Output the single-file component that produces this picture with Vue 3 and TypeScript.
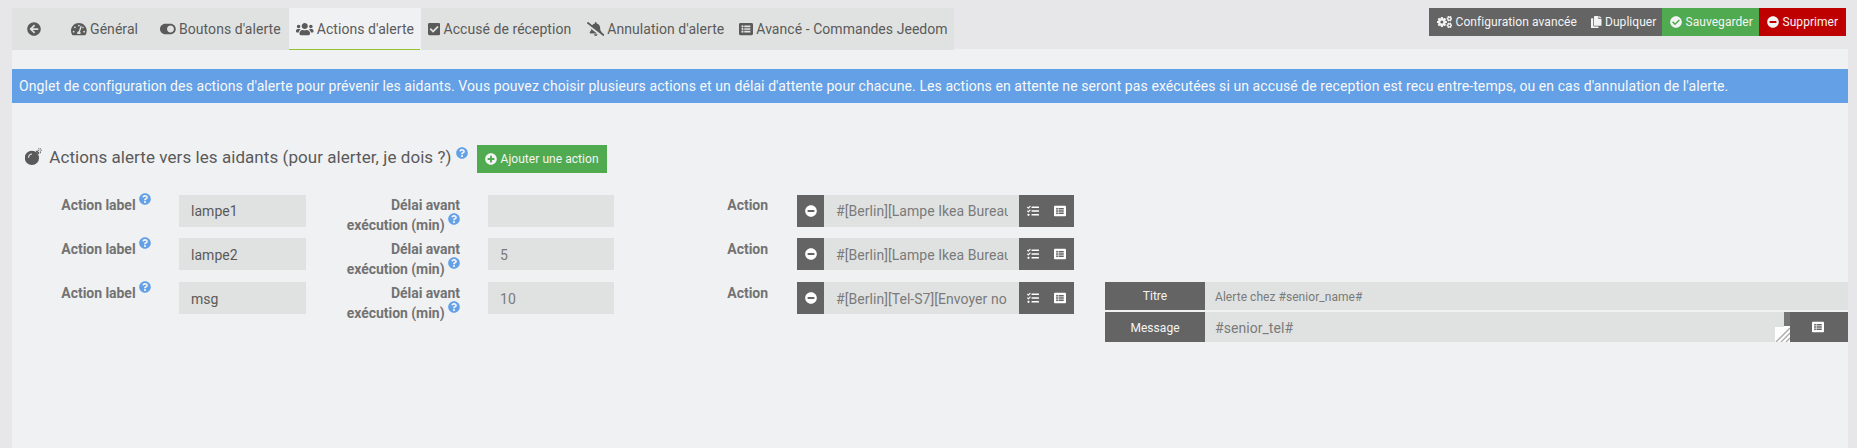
<script setup lang="ts">
import { defineComponent, h } from 'vue'

const circle = 'M504 256c0 137-111 248-248 248S8 393 8 256 119 8 256 8s248 111 248 248z'
const taskBars = 'M496 384H208a16 16 0 0 0-16 16v32a16 16 0 0 0 16 16h288a16 16 0 0 0 16-16v-32a16 16 0 0 0-16-16zm0-320H208a16 16 0 0 0-16 16v32a16 16 0 0 0 16 16h288a16 16 0 0 0 16-16V80a16 16 0 0 0-16-16zm0 160H208a16 16 0 0 0-16 16v32a16 16 0 0 0 16 16h288a16 16 0 0 0 16-16v-32a16 16 0 0 0-16-16z'

function gear(cx: number, cy: number, outer: number, inner: number, hole: number, teeth: number): string {
  const pts: string[] = []
  const step = (Math.PI * 2) / teeth
  for (let i = 0; i < teeth; i++) {
    const a = i * step
    const corners: [number, number][] = [[-0.36, inner], [-0.26, outer], [0.26, outer], [0.36, inner]]
    for (const [o, r] of corners) {
      pts.push(`${(cx + r * Math.cos(a + o * step)).toFixed(1)} ${(cy + r * Math.sin(a + o * step)).toFixed(1)}`)
    }
  }
  return `M${pts.join('L')}ZM${cx - hole} ${cy}a${hole} ${hole} 0 1 0 ${hole * 2} 0a${hole} ${hole} 0 1 0 ${-hole * 2} 0Z`
}

const icons: Record<string, { w: number; d: string }> = {
  back: { w: 512, d: 'M256 504C119 504 8 393 8 256S119 8 256 8s248 111 248 248-111 248-248 248zm28.9-143.6L209.4 288H392c13.3 0 24-10.7 24-24v-16c0-13.3-10.7-24-24-24H209.4l75.5-72.4c9.7-9.3 9.9-24.8.4-34.3l-11-10.9c-9.4-9.4-24.6-9.4-33.9 0L107.7 239c-9.4 9.4-9.4 24.6 0 33.9l132.7 132.7c9.4 9.4 24.6 9.4 33.9 0l11-10.9c9.5-9.5 9.3-25-.4-34.3z' },
  gauge: { w: 576, d: 'M288 32C129 32 0 161 0 320c0 53 14 102 39 145 6 10 17 15 28 15h442c11 0 22-5 28-15 25-43 39-92 39-145C576 161 447 32 288 32zM288 96a32 32 0 1 1 0 64 32 32 0 0 1 0-64zM96 384a32 32 0 1 1 0-64 32 32 0 0 1 0 64zm48-160a32 32 0 1 1 0-64 32 32 0 0 1 0 64zm247-52l-61 184c13 12 22 28 22 48 0 12-3 23-9 32H233c-6-9-9-20-9-32 0-34 27-62 60-64l61-183c4-13 18-20 31-15 12 4 19 17 15 30zm14 57l23-69c22 0 36 14 36 32 0 22-18 37-36 37-9 0-17 0-23 0zm75 155a32 32 0 1 1 0-64 32 32 0 0 1 0 64z' },
  toggle: { w: 576, d: 'M384 64H192C86 64 0 150 0 256s86 192 192 192h192c106 0 192-86 192-192S490 64 384 64zm0 320c-70.8 0-128-57.3-128-128 0-70.8 57.3-128 128-128 70.8 0 128 57.3 128 128 0 70.8-57.3 128-128 128z' },
  users: { w: 640, d: 'M96 224c35.3 0 64-28.7 64-64s-28.7-64-64-64-64 28.7-64 64 28.7 64 64 64zm448 0c35.3 0 64-28.7 64-64s-28.7-64-64-64-64 28.7-64 64 28.7 64 64 64zm32 32h-64c-17.6 0-33.5 7.1-45.1 18.6 40.3 22.1 68.9 62 75.1 109.4h66c17.7 0 32-14.3 32-32v-32c0-35.3-28.7-64-64-64zm-256 0c61.9 0 112-50.1 112-112S381.9 32 320 32 208 82.1 208 144s50.1 112 112 112zm76.8 32h-8.3c-20.8 10-43.9 16-68.5 16s-47.6-6-68.5-16h-8.3C179.6 288 128 339.6 128 403.2V432c0 26.5 21.5 48 48 48h288c26.5 0 48-21.5 48-48v-28.8c0-63.6-51.6-115.2-115.2-115.2zm-223.7-13.4C161.5 263.1 145.6 256 128 256H64c-35.3 0-64 28.7-64 64v32c0 17.7 14.3 32 32 32h65.9c6.3-47.4 34.9-87.3 75.2-109.4z' },
  checkSquare: { w: 448, d: 'M400 480H48c-26.51 0-48-21.49-48-48V80c0-26.51 21.49-48 48-48h352c26.51 0 48 21.49 48 48v352c0 26.51-21.49 48-48 48zm-204.686-98.059l184-184c6.248-6.248 6.248-16.379 0-22.627l-22.627-22.627c-6.248-6.248-16.379-6.249-22.628 0L184 302.745l-70.059-70.059c-6.248-6.248-16.379-6.248-22.628 0l-22.627 22.627c-6.248 6.248-6.248 16.379 0 22.627l104 104c6.249 6.25 16.379 6.25 22.628.001z' },
  bellSlash: { w: 640, d: 'M633.82 458.1l-90.62-70.05c.19-1.38.8-2.66.8-4.06.05-7.55-2.61-15.27-8.61-21.71-19.32-20.76-55.47-51.99-55.47-154.29 0-77.7-54.48-139.9-127.94-155.16V32c0-17.67-14.32-32-31.98-32s-31.98 14.33-31.98 32v20.84c-40.33 8.38-74.66 31.07-97.59 62.57L45.47 3.37C38.49-2.05 28.43-.8 23.01 6.18L3.37 31.45C-2.05 38.42-.8 48.47 6.18 53.9l588.35 454.73c6.98 5.43 17.03 4.17 22.46-2.81l19.64-25.27c5.42-6.97 4.17-17.02-2.81-22.45zM157.23 251.54c-8.61 67.96-36.41 93.33-52.62 110.75-6 6.45-8.66 14.16-8.61 21.71.11 16.4 12.98 32 32.1 32h241.12L157.23 251.54zM320 512c35.32 0 63.97-28.65 63.97-64H256.03c0 35.35 28.65 64 63.97 64z' },
  list: { w: 512, d: 'M464 480H48c-26.51 0-48-21.49-48-48V80c0-26.51 21.49-48 48-48h416c26.51 0 48 21.49 48 48v352c0 26.51-21.49 48-48 48zM88 160a40 40 0 1 0 80 0 40 40 0 1 0-80 0zM88 256a40 40 0 1 0 80 0 40 40 0 1 0-80 0zM88 352a40 40 0 1 0 80 0 40 40 0 1 0-80 0zM192 132v56h224v-56zM192 228v56h224v-56zM192 324v56h224v-56z' },
  cogs: { w: 640, d: gear(208, 256, 218, 166, 66, 8) + gear(528, 112, 122, 92, 40, 6) + gear(528, 400, 122, 92, 40, 6) },
  copy: { w: 448, d: 'M320 448v40c0 13.255-10.745 24-24 24H24c-13.255 0-24-10.745-24-24V120c0-13.255 10.745-24 24-24h72v296c0 30.879 25.121 56 56 56h168zm0-344V0H152c-13.255 0-24 10.745-24 24v368c0 13.255 10.745 24 24 24h272c13.255 0 24-10.745 24-24V128H344c-13.2 0-24-10.8-24-24zm120.971-31.029L375.029 7.029A24 24 0 0 0 358.059 0H352v96h96v-6.059a24 24 0 0 0-7.029-16.97z' },
  check: { w: 512, d: circle + 'M227.314 387.314l184-184c6.248-6.248 6.248-16.379 0-22.627l-22.627-22.627c-6.248-6.249-16.379-6.249-22.628 0L216 308.118l-70.059-70.059c-6.248-6.248-16.379-6.248-22.628 0l-22.627 22.627c-6.248 6.248-6.248 16.379 0 22.627l104 104c6.249 6.249 16.379 6.249 22.628.001z' },
  minus: { w: 512, d: circle + 'M124 296c-6.6 0-12-5.4-12-12v-56c0-6.6 5.4-12 12-12h264c6.6 0 12 5.4 12 12v56c0 6.6-5.4 12-12 12H124z' },
  plus: { w: 512, d: circle + 'M400 284c0 6.6-5.4 12-12 12h-92v92c0 6.6-5.4 12-12 12h-56c-6.6 0-12-5.4-12-12v-92h-92c-6.6 0-12-5.4-12-12v-56c0-6.6 5.4-12 12-12h92v-92c0-6.6 5.4-12 12-12h56c6.6 0 12 5.4 12 12v92h92c6.6 0 12 5.4 12 12v56z' },
  help: { w: 512, d: circle + 'M262.655 90c-54.497 0-89.255 22.957-116.549 63.758-3.536 5.286-2.353 12.415 2.715 16.258l34.699 26.31c5.205 3.947 12.621 3.008 16.665-2.122 17.864-22.658 30.113-35.797 57.303-35.797 20.429 0 45.698 13.148 45.698 32.958 0 14.976-12.363 22.667-32.534 33.976C247.128 238.528 216 254.941 216 296v4c0 6.627 5.373 12 12 12h56c6.627 0 12-5.373 12-12v-1.333c0-28.462 83.186-29.647 83.186-106.667 0-58.002-60.165-102-116.531-102zM256 338c-25.365 0-46 20.635-46 46 0 25.364 20.635 46 46 46s46-20.636 46-46c0-25.365-20.635-46-46-46z' },
  tasks: { w: 512, d: 'M139.61 35.5a12 12 0 0 0-17 0L58.93 98.81l-22.7-22.12a12 12 0 0 0-17 0L3.53 92.41a12 12 0 0 0 0 17l47.59 47.4a12.78 12.78 0 0 0 17.61 0l15.59-15.62L156.52 69a12.09 12.09 0 0 0 .09-17zm0 159.19a12 12 0 0 0-17 0l-63.68 63.72-22.7-22.1a12 12 0 0 0-17 0L3.53 252a12 12 0 0 0 0 17L51 316.5a12.77 12.77 0 0 0 17.6 0l15.7-15.69 72.2-72.22a12 12 0 0 0 .09-16.9zM64 368c-26.49 0-48.59 21.5-48.59 48S37.53 464 64 464a48 48 0 0 0 0-96z' + taskBars },
  bomb: { w: 512, d: 'M208 80a216 216 0 1 0 0 432 216 216 0 1 0 0-432zM92 296c0-72 50-128 116-128v30c-50 0-86 40-86 98zM324 104l34-34 84 84-34 34zM390 60l42 10-10 24-40-14zM448 0l22 0 0 44-24 0zM440 96l30-24 18 20-30 24zM480 52l32 0 0 24-32 0zM452 120l24 0 0 38-24 0zM396 16l20-14 20 34-20 12z' },
}

const Icon = defineComponent({
  props: { name: { type: String, required: true }, size: { type: Number, default: 14 } },
  setup(props) {
    return () => {
      const icon = icons[props.name]
      return h('svg', {
        viewBox: `0 0 ${icon.w} 512`,
        width: (icon.w / 512) * props.size,
        height: props.size,
        fill: 'currentColor',
        'fill-rule': 'evenodd',
        'aria-hidden': 'true',
      }, [h('path', { d: icon.d })])
    }
  },
})

const tabs = [
  { icon: 'back', label: '' },
  { icon: 'gauge', label: 'Général' },
  { icon: 'toggle', label: "Boutons d'alerte" },
  { icon: 'users', label: "Actions d'alerte", active: true },
  { icon: 'checkSquare', label: 'Accusé de réception' },
  { icon: 'bellSlash', label: "Annulation d'alerte" },
  { icon: 'list', label: 'Avancé - Commandes Jeedom' },
]

interface AlertAction { label: string; delay: string; command: string; title?: string; message?: string }
const actions: AlertAction[] = [
  { label: 'lampe1', delay: '', command: '#[Berlin][Lampe Ikea Bureau' },
  { label: 'lampe2', delay: '5', command: '#[Berlin][Lampe Ikea Bureau' },
  { label: 'msg', delay: '10', command: '#[Berlin][Tel-S7][Envoyer no', title: 'Alerte chez #senior_name#', message: '#senior_tel#' },
]
</script>

<template>
  <div class="page">
    <header class="top">
      <nav class="tabs">
        <a v-for="(tab, i) in tabs" :key="i" class="tab" :class="{ active: tab.active, back: !tab.label }">
          <Icon :name="tab.icon" /><span v-if="tab.label">{{ tab.label }}</span>
        </a>
      </nav>
      <div class="toolbar">
        <a class="btn config"><Icon name="cogs" :size="12" /><span>Configuration avancée</span></a>
        <a class="btn copy"><Icon name="copy" :size="12" /><span>Dupliquer</span></a>
        <a class="btn save"><Icon name="check" :size="12" /><span>Sauvegarder</span></a>
        <a class="btn remove"><Icon name="minus" :size="12" /><span>Supprimer</span></a>
      </div>
    </header>
    <main class="panel">
      <div class="notice">Onglet de configuration des actions d'alerte pour prévenir les aidants. Vous pouvez choisir plusieurs actions et un délai d'attente pour chacune. Les actions en attente ne seront pas exécutées si un accusé de reception est recu entre-temps, ou en cas d'annulation de l'alerte.</div>
      <div class="legend">
        <Icon name="bomb" :size="17" />
        <h1>Actions alerte vers les aidants (pour alerter, je dois ?)</h1>
        <Icon class="help" name="help" :size="12" />
        <a class="btn add"><Icon name="plus" :size="12" /><span>Ajouter une action</span></a>
      </div>
      <form class="rows">
        <div v-for="(action, i) in actions" :key="i" class="row">
          <label>Action label <Icon class="help" name="help" :size="12" /></label>
          <input class="field" :value="action.label">
          <label>Délai avant<br>exécution (min) <Icon class="help" name="help" :size="12" /></label>
          <input class="field muted" :value="action.delay">
          <label>Action</label>
          <div class="command">
            <span class="cap"><Icon name="minus" :size="12" /></span>
            <input class="field muted" :value="action.command">
            <span class="cap pair"><Icon name="tasks" :size="12" /><Icon name="list" :size="12" /></span>
          </div>
          <div v-if="action.title" class="options">
            <div class="option">
              <span class="name">Titre</span>
              <input class="field muted small" :value="action.title">
            </div>
            <div class="option message">
              <span class="name">Message</span>
              <div class="area">
                {{ action.message }}
                <svg class="grip" viewBox="0 0 15 16" width="15" height="16" aria-hidden="true">
                  <path d="M0 1H9V0H15V16H0Z" fill="#fff" />
                  <path d="M1 16L15 2M6 16L15 7M11 16L15 12" stroke="#aaa" stroke-width="1.3" fill="none" />
                </svg>
              </div>
              <span class="pick"><Icon name="list" :size="12" /></span>
            </div>
          </div>
        </div>
      </form>
    </main>
  </div>
</template>

<style>
body { margin: 0; background: #e7e7e9; }
</style>

<style scoped>
.page {
  box-sizing: border-box;
  height: 448px;
  padding: 8px 9px 0 12px;
  overflow: hidden;
  background: #e7e7e9;
  color: #5a5a5a;
  font: 14px/20px Roboto, "Liberation Sans", sans-serif;
  letter-spacing: 0.05px;
  display: flex;
  flex-direction: column;
}
svg { flex: none; display: block; }
.top { display: flex; justify-content: space-between; height: 41px; }
.tabs { display: grid; grid-template-columns: 52px 89px 136px 132px 158.5px 152.5px 222px; height: 42px; z-index: 1; }
.tab {
  display: flex; align-items: center; gap: 3.3px; padding: 0 0 0 7px; height: 42px;
  box-sizing: border-box; background: #e0e2e1; white-space: nowrap;
}
.tab.back { padding-left: 15px; }
.tab.active { background: linear-gradient(#94c22f, #94c22f) 0 100% / 131px 1px no-repeat #f0f1f3; }
.toolbar { display: flex; height: 28px; margin-right: 2px; }
.btn {
  display: flex; align-items: center; gap: 3.5px; padding-left: 8px; height: 28px; box-sizing: border-box;
  color: #f4f4f4; font-size: 12px; line-height: 18px; white-space: nowrap; background: #646464;
}
.config { width: 154px; letter-spacing: 0.08px; }
.copy { width: 79px; }
.save { width: 97px; background: #50aa50; }
.remove { width: 87px; background: #be0000; }
.panel { flex: 1; background: #f0f1f3; padding-top: 20px; }
.notice {
  height: 34px; line-height: 34px; padding-left: 7px; background: #64a0e6; color: #f8f8f8;
  letter-spacing: 0.085px; white-space: nowrap;
}
.legend { display: flex; width: 582px; height: 28px; margin-top: 42px; padding-left: 13px; }
.legend > svg:first-child { margin-top: 3px; }
.legend h1 { margin: 0 0 0 7.3px; font-size: 17px; font-weight: 400; line-height: 24px; letter-spacing: 0.06px; white-space: nowrap; }
.legend .help { margin: 2px 0 0 4.5px; }
.help { color: #64a0e6; }
.add { width: 130px; margin-left: auto; background: #50aa50; }
.rows { margin-top: 22px; }
.row {
  display: grid; grid-template-columns: 139px 127px 126px 126px 126px 278px 1fr; column-gap: 28px;
  height: 44px; align-items: start;
}
.row:first-child { height: 43px; }
label { padding-top: 1px; color: #737373; font-weight: 700; letter-spacing: -0.04px; text-align: right; line-height: 20px; white-space: nowrap; }
.row:first-child label { padding-top: 0; }
label .help { display: inline-block; vertical-align: 5px; margin: -6px 0 0 0; }
.field {
  box-sizing: border-box; width: 100%; min-width: 0; height: 32px; margin: 0; border: 0; border-radius: 0;
  padding: 2px 11px 0 12px; background: #e0e2e1; color: #5a5a5a; font: inherit; letter-spacing: inherit; outline: 0;
}
.row:first-child .field { padding-top: 0; }
.muted { color: #7a7a7a; }
.command { display: flex; padding-left: 1px; }
.cap { flex: none; display: flex; align-items: center; width: 27px; height: 32px; padding: 0 0 1px 7.5px; box-sizing: border-box; background: #646464; color: #fff; }
.pair { width: 55px; gap: 15px; }
.options { padding-left: 3px; }
.option { display: flex; height: 28px; }
.name { flex: none; width: 100px; background: #646464; color: #f4f4f4; font-size: 12px; text-align: center; line-height: 29px; }
.small { height: 28px; font-size: 12px; padding: 2px 10px 0; }
.message { height: 30px; margin-top: 2px; }
.message .name { line-height: 32px; }
.area {
  position: relative; flex: 1; box-sizing: border-box; padding-left: 10px; line-height: 32px; color: #7a7a7a;
  background: linear-gradient(#757575, #757575) 100% 0 / 6px 100% no-repeat #e0e2e1;
}
.grip { position: absolute; right: 0; bottom: 0; }
.grip path:first-child { shape-rendering: crispEdges; }
.pick { flex: none; display: flex; align-items: center; padding-left: 22px; box-sizing: border-box; width: 58px; background: #646464; color: #fff; }
</style>
